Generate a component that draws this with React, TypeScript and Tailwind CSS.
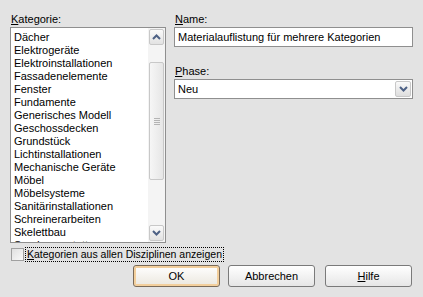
import React from "react";

const KATEGORIEN = [
  "Dächer",
  "Elektrogeräte",
  "Elektroinstallationen",
  "Fassadenelemente",
  "Fenster",
  "Fundamente",
  "Generisches Modell",
  "Geschossdecken",
  "Grundstück",
  "Lichtinstallationen",
  "Mechanische Geräte",
  "Möbel",
  "Möbelsysteme",
  "Sanitärinstallationen",
  "Schreinerarbeiten",
  "Skelettbau",
  "Sonderausstattung",
];

const Chevron = ({ up }: { up?: boolean }) => (
  <svg width="9" height="6" viewBox="0 0 9 6">
    <path
      d={up ? "M1 5 L4.5 1.5 L8 5" : "M1 1 L4.5 4.5 L8 1"}
      fill="none"
      stroke="#4d6185"
      strokeWidth="2"
    />
  </svg>
);

const ScrollButton = ({ up }: { up?: boolean }) => (
  <div className="h-[16px] mx-[1px] flex items-center justify-center border border-[#c8c8c8] rounded-[2px] bg-gradient-to-b from-[#fafafa] to-[#e2e2e2]">
    <Chevron up={up} />
  </div>
);

const DialogButton = ({
  children,
  isDefault,
}: {
  children: React.ReactNode;
  isDefault?: boolean;
}) => (
  <div
    className={
      isDefault
        ? "w-[87px] h-[22px] flex items-center justify-center rounded-[3px] border border-[#7a6a58] bg-gradient-to-b from-[#ffffff] to-[#ebe7de] shadow-[inset_0_0_0_2px_#f3cf9c]"
        : "w-[87px] h-[22px] flex items-center justify-center rounded-[3px] border border-[#7a7a7a] bg-gradient-to-b from-[#ffffff] to-[#e6e6e6]"
    }
  >
    {children}
  </div>
);

export default function App() {
  return (
    <div className="w-[423px] h-[297px] bg-[#e3e3e3] flex flex-col font-['Liberation_Sans',sans-serif] text-[11px] text-black">
      <div className="flex pt-[13px] pl-[10px]">
        {/* Kategorie */}
        <div className="w-[156px] flex flex-col">
          <div className="h-[14px] leading-[13px] pl-[1px]">
            <span className="underline">K</span>ategorie:
          </div>
          <div className="h-[216px] flex border border-[#8f8f8f] bg-white">
            <div className="flex-1 overflow-hidden pl-[3px] pt-[3px]">
              {KATEGORIEN.map((item) => (
                <div key={item} className="h-[13px] leading-[13px] whitespace-nowrap">
                  {item}
                </div>
              ))}
            </div>
            <div className="w-[17px] flex flex-col bg-[#f4f4f4] py-[1px]">
              <ScrollButton up />
              <div className="mt-[17px] h-[118px] mx-[1px] flex items-center justify-center border border-[#c8c8c8] rounded-[2px] bg-gradient-to-r from-[#f6f6f6] to-[#e6e6e6]">
                <div className="flex flex-col gap-[1px]">
                  <div className="w-[6px] h-[1px] bg-[#b4b4b4]" />
                  <div className="w-[6px] h-[1px] bg-[#b4b4b4]" />
                  <div className="w-[6px] h-[1px] bg-[#b4b4b4]" />
                  <div className="w-[6px] h-[1px] bg-[#b4b4b4]" />
                </div>
              </div>
              <div className="flex-1" />
              <ScrollButton />
            </div>
          </div>
        </div>

        {/* Name / Phase */}
        <div className="ml-[8px] w-[239px] flex flex-col">
          <div className="h-[14px] leading-[13px] pl-[1px]">
            <span className="underline">N</span>ame:
          </div>
          <div className="h-[20px] border border-[#8f8f8f] bg-white pl-[3px] leading-[18px] whitespace-nowrap">
            Materialauflistung für mehrere Kategorien
          </div>
          <div className="mt-[18px] h-[14px] leading-[13px] pl-[1px]">
            <span className="underline">P</span>hase:
          </div>
          <div className="h-[20px] flex border border-[#8f8f8f] bg-white">
            <div className="flex-1 pl-[3px] leading-[18px]">Neu</div>
            <div className="w-[16px] m-[1px] flex items-center justify-center border border-[#c8c8c8] rounded-[2px] bg-gradient-to-b from-[#fafafa] to-[#dedede]">
              <Chevron />
            </div>
          </div>
        </div>
      </div>

      {/* Checkbox */}
      <div className="flex items-center pl-[11px] mt-[4px] h-[15px]">
        <div className="w-[13px] h-[13px] border border-[#a0a0a0] bg-gradient-to-br from-[#e0e0e0] to-[#fafafa]" />
        <div className="ml-[1px] h-[15px] px-[1px] text-[10.5px] leading-[13px] border border-dotted border-black whitespace-nowrap">
          <span className="underline">K</span>ategorien aus allen Disziplinen anzeigen
        </div>
      </div>

      {/* Buttons */}
      <div className="flex mt-[3px] pl-[133px]">
        <DialogButton isDefault>OK</DialogButton>
        <div className="ml-[8px]">
          <DialogButton>Abbrechen</DialogButton>
        </div>
        <div className="ml-[10px]">
          <DialogButton>
            <span>
              <span className="underline">H</span>ilfe
            </span>
          </DialogButton>
        </div>
      </div>
    </div>
  );
}
